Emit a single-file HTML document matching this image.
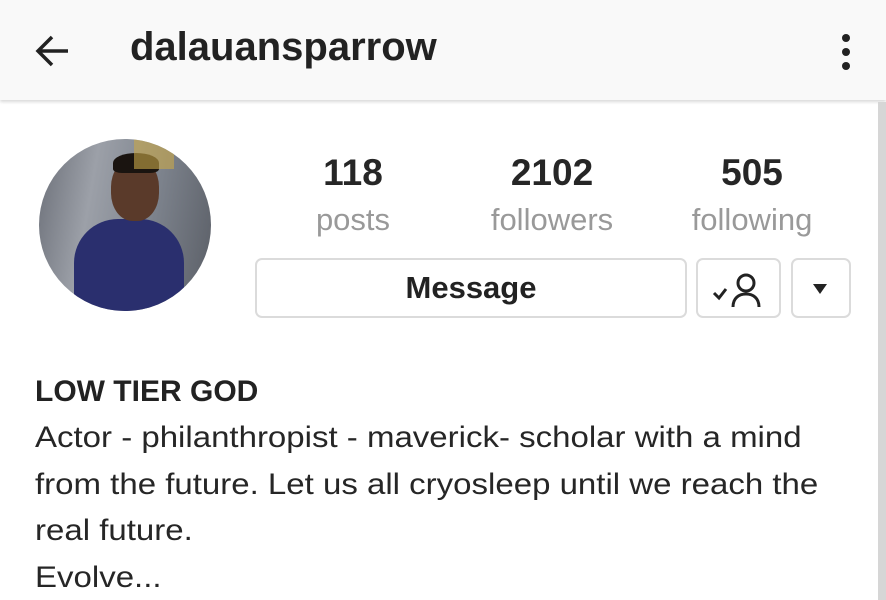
<!DOCTYPE html>
<html><head><style>
body{margin:0;width:886px;height:600px;overflow:hidden;background:#fff;font-family:"Liberation Sans",sans-serif;color:#262626;position:relative}
.hdr{position:absolute;left:0;top:0;width:886px;height:100px;background:#f9f9f9;box-shadow:0 2px 3px rgba(0,0,0,.15)}
.t{position:absolute;white-space:nowrap}
.sb{position:absolute;right:0;top:102px;width:8px;height:498px;background:#d6d6d6}
.btn{position:absolute;border:2px solid #dbdbdb;border-radius:7px;box-sizing:border-box;background:#fff}
.num{font-size:37px;font-weight:bold;width:200px;text-align:center}
.lbl{font-size:31px;color:#999;width:200px;text-align:center}
.bio{font-size:30px;left:35px;transform:scaleX(1.1);transform-origin:left}
</style></head><body>
<div class="hdr">
<svg style="position:absolute;left:33px;top:32px" width="38" height="38" viewBox="0 0 38 38"><path d="M35 19H5M19 5L5 19l14 14" stroke="#222" stroke-width="3.5" fill="none"/></svg>
<div class="t" style="left:130px;top:25px;font-size:40px;font-weight:bold;color:#222">dalauansparrow</div>
<div style="position:absolute;left:842px;top:34px;width:8px;height:8px;border-radius:50%;background:#222"></div>
<div style="position:absolute;left:842px;top:48px;width:8px;height:8px;border-radius:50%;background:#222"></div>
<div style="position:absolute;left:842px;top:62px;width:8px;height:8px;border-radius:50%;background:#222"></div>
</div>
<div class="sb"></div>
<div style="position:absolute;left:39px;top:139px;width:172px;height:172px;border-radius:50%;overflow:hidden;background:linear-gradient(100deg,#6b6f78 0%,#9ca0a8 30%,#808690 60%,#5a5e66 100%)">
<div style="position:absolute;left:35px;top:80px;width:110px;height:110px;border-radius:40% 40% 0 0;background:#2a2f6e"></div>
<div style="position:absolute;left:72px;top:20px;width:48px;height:62px;border-radius:45%;background:#5a3a2a"></div>
<div style="position:absolute;left:74px;top:14px;width:46px;height:20px;border-radius:50% 50% 20% 20%;background:#1a1410"></div>
<div style="position:absolute;left:95px;top:0;width:40px;height:30px;background:#c9a94a;opacity:.6"></div>
</div>
<div class="t num" style="left:253px;top:152px">118</div>
<div class="t num" style="left:452px;top:152px">2102</div>
<div class="t num" style="left:652px;top:152px">505</div>
<div class="t lbl" style="left:253px;top:202px">posts</div>
<div class="t lbl" style="left:452px;top:202px">followers</div>
<div class="t lbl" style="left:652px;top:202px">following</div>
<div class="btn" style="left:255px;top:258px;width:432px;height:60px"><div style="text-align:center;font-size:31px;font-weight:bold;line-height:56px;color:#222">Message</div></div>
<div class="btn" style="left:696px;top:258px;width:85px;height:60px">
<svg style="position:absolute;left:13px;top:9px" width="56" height="40" viewBox="0 0 56 40"><path d="M3 24l5 5 7-9" stroke="#222" stroke-width="3" fill="none"/><circle cx="35" cy="14" r="8" stroke="#222" stroke-width="3" fill="none"/><path d="M22 38c0-9 6-13 13-13s13 4 13 13" stroke="#222" stroke-width="3" fill="none"/></svg>
</div>
<div class="btn" style="left:791px;top:258px;width:60px;height:60px"><div style="position:absolute;left:20px;top:24px;width:0;height:0;border-left:7px solid transparent;border-right:7px solid transparent;border-top:10px solid #222"></div></div>
<div class="t" style="left:35px;top:375px;font-size:30px;font-weight:bold;color:#222">LOW TIER GOD</div>
<div class="t bio" style="top:421px">Actor - philanthropist - maverick- scholar with a mind</div>
<div class="t bio" style="top:468px">from the future. Let us all cryosleep until we reach the</div>
<div class="t bio" style="top:514px">real future.</div>
<div class="t bio" style="top:561px">Evolve...</div>
</body></html>
